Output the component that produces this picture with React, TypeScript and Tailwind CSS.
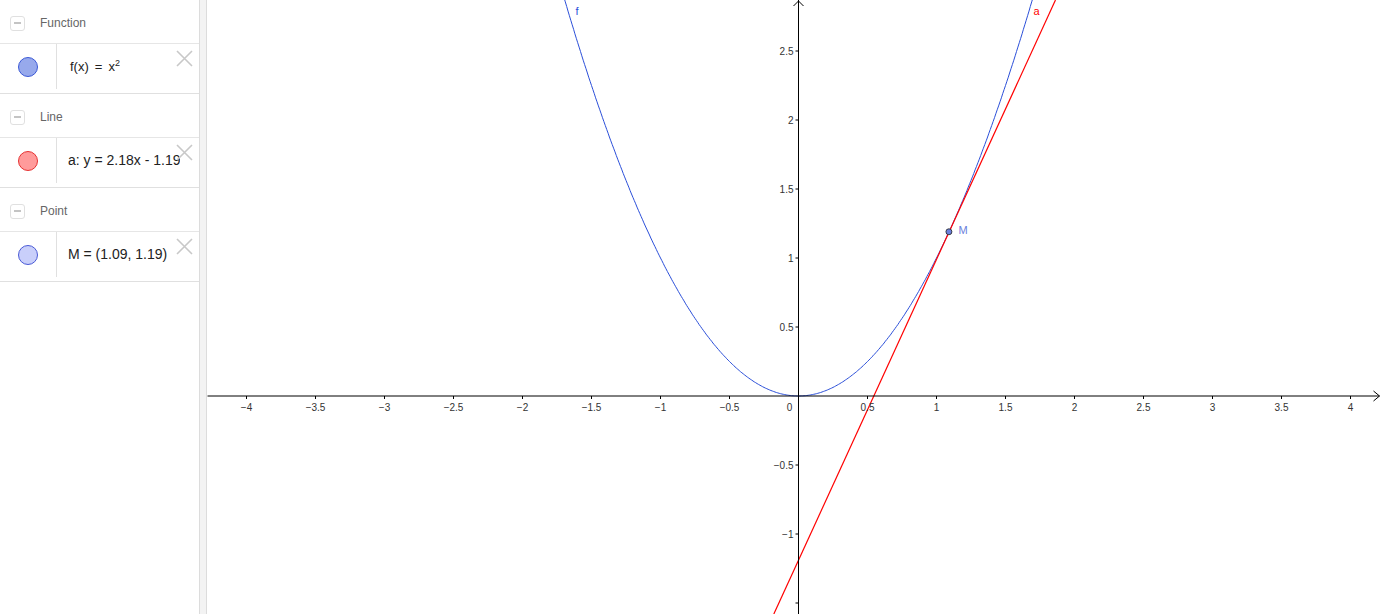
import React from "react";

const OX = 799;
const OY = 396;
const S = 138;
const px = (x: number) => OX + x * S;
const py = (y: number) => OY - y * S;

type Item = {
  group: string;
  text: React.ReactNode;
  fill: string;
  stroke: string;
  size: string;
};

const items: Item[] = [
  {
    group: "Function",
    text: (
      <span className="pl-[2px]">
        f(x)<span className="mx-[6px]">=</span>x<sup className="text-[9px]">2</sup>
      </span>
    ),
    fill: "#97a9ec",
    stroke: "#3b59d6",
    size: "text-[13px]",
  },
  { group: "Line", text: "a: y = 2.18x - 1.19", fill: "#ff9b9b", stroke: "#e63232", size: "text-[14px]" },
  { group: "Point", text: "M = (1.09, 1.19)", fill: "#c9cffa", stroke: "#4a5ad6", size: "text-[14px]" },
];

function Sidebar() {
  return (
    <aside className="w-[200px] shrink-0 border-r border-[#dcdcdc] bg-white">
      {items.map((item) => (
        <div key={item.group}>
          <div className="flex h-[44px] items-center border-b border-[#e6e6e6] pl-[10px] pt-[3px]">
            <span className="flex h-[15px] w-[15px] items-center justify-center rounded-[3px] border border-[#e0e0e0]">
              <span className="h-[1.5px] w-[7px] bg-[#c4c4c4]" />
            </span>
            <span className="ml-[15px] text-[12px] text-[#666]">{item.group}</span>
          </div>
          <div className="relative flex h-[50px] border-b border-[#e0e0e0] pb-[4px]">
            <div className="flex w-[57px] shrink-0 items-center justify-center border-r border-[#e0e0e0]">
              <span
                className="h-[20px] w-[20px] rounded-full border"
                style={{ background: item.fill, borderColor: item.stroke }}
              />
            </div>
            <div className={`flex items-center overflow-hidden whitespace-nowrap pl-[11px] text-[#222] ${item.size}`}>
              {item.text}
            </div>
            <svg className="absolute right-[6px] top-[6px]" width="17" height="17" viewBox="0 0 17 17">
              <path d="M1 1L16 16M16 1L1 16" stroke="#c8c8c8" strokeWidth="1.6" />
            </svg>
          </div>
        </div>
      ))}
    </aside>
  );
}

function Graph() {
  const xt = [-4, -3.5, -3, -2.5, -2, -1.5, -1, -0.5, 0.5, 1, 1.5, 2, 2.5, 3, 3.5, 4];
  const yt = [2.5, 2, 1.5, 1, 0.5, -0.5, -1, -1.5];
  const fmt = (v: number) => (v < 0 ? "\u2212" + Math.abs(v) : String(v));

  const pts: string[] = [];
  for (let x = -1.72; x <= 1.72; x += 0.01) pts.push(`${px(x).toFixed(1)},${py(x * x).toFixed(1)}`);

  const yTop = OY / S;
  const yBot = -(614 - OY) / S;
  const lx1 = (yTop + 1.19) / 2.18;
  const lx2 = (yBot + 1.19) / 2.18;

  return (
    <svg className="block h-[614px] flex-1" viewBox="208 0 1174 614" style={{ fontFamily: '"Liberation Sans", Arial, sans-serif' }}>
      <polyline points={pts.join(" ")} fill="none" stroke="#2b4fd9" strokeWidth="1" />
      <line x1={px(lx1)} y1={0} x2={px(lx2)} y2={614} stroke="#ff0000" strokeWidth="1.2" />

      <line x1={208} y1={OY} x2={1380} y2={OY} stroke="#000" strokeWidth="1" />
      <path d={`M1374 ${OY - 5} L1380 ${OY} L1374 ${OY + 5}`} fill="none" stroke="#000" strokeWidth="1" />
      <line x1={OX} y1={0} x2={OX} y2={614} stroke="#000" strokeWidth="1" />
      <path d={`M${OX - 5} 6 L${OX} 1 L${OX + 5} 6`} fill="none" stroke="#000" strokeWidth="1" />

      {xt.map((v) => (
        <g key={v}>
          <line x1={px(v)} y1={OY} x2={px(v)} y2={OY + 3} stroke="#000" />
          <text x={px(v)} y={411} fontSize="10" fill="#333" textAnchor="middle">
            {fmt(v)}
          </text>
        </g>
      ))}
      <text x={790} y={411} fontSize="10" fill="#333" textAnchor="middle">
        0
      </text>
      {yt.map((v) => (
        <g key={v}>
          <line x1={OX - 3} y1={py(v)} x2={OX} y2={py(v)} stroke="#000" />
          {v !== -1.5 && (
            <text x={794} y={py(v) + 3.5} fontSize="10" fill="#333" textAnchor="end">
              {fmt(v)}
            </text>
          )}
        </g>
      ))}

      <circle cx={px(1.09)} cy={py(1.19)} r="3" fill="#6b80dc" stroke="#222" strokeWidth="0.8" />
      <text x={959} y={234} fontSize="11" fill="#6b80dc">
        M
      </text>
      <text x={576} y={15} fontSize="11" fill="#2b4fd9">
        f
      </text>
      <text x={1034} y={15} fontSize="11" fill="#ff0000">
        a
      </text>
    </svg>
  );
}

export default function App() {
  return (
    <div className="flex h-[614px] w-full overflow-hidden bg-white" style={{ fontFamily: '"Liberation Sans", Arial, sans-serif' }}>
      <Sidebar />
      <div className="w-[7px] shrink-0 border-r border-[#dcdcdc] bg-[#f3f3f3]" />
      <Graph />
    </div>
  );
}
